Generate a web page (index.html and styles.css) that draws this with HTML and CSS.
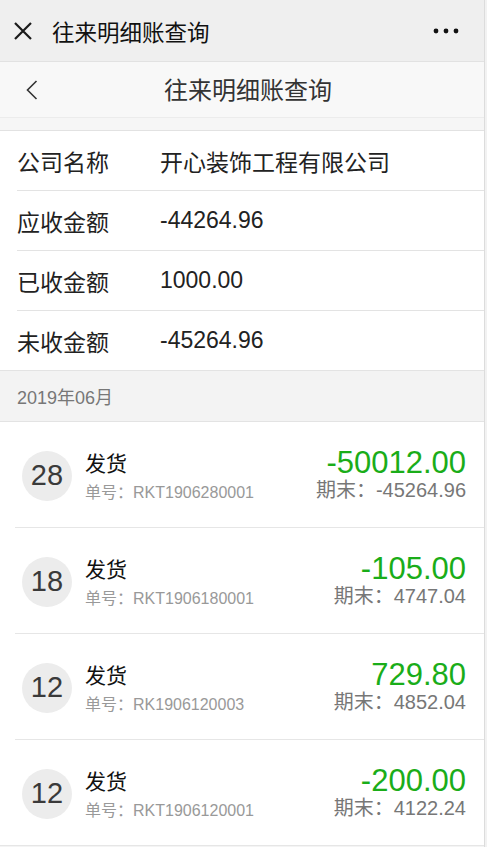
FILE: index.html
```html
<!DOCTYPE html>
<html lang="zh-CN">
<head>
<meta charset="utf-8">
<title>往来明细账查询</title>
<link rel="stylesheet" href="styles.css">
</head>
<body>
<div class="page">
  <header class="wxbar">
    <svg class="wx-close" width="20" height="20" viewBox="0 0 20 20"><path d="M2 2 L18 18 M18 2 L2 18" stroke="#1a1a1a" stroke-width="2.2" fill="none"/></svg>
    <div class="wx-title">往来明细账查询</div>
    <svg class="wx-more" width="26" height="6" viewBox="0 0 26 6"><circle cx="3" cy="3" r="2.4" fill="#111"/><circle cx="13" cy="3" r="2.4" fill="#111"/><circle cx="23" cy="3" r="2.4" fill="#111"/></svg>
  </header>
  <nav class="nav">
    <svg class="nav-back" width="12" height="20" viewBox="0 0 12 20"><path d="M10.5 1 L1.5 10 L10.5 19" stroke="#333" stroke-width="1.6" fill="none"/></svg>
    <div class="nav-title">往来明细账查询</div>
  </nav>
  <div class="gap"></div>
  <section class="info">
    <div class="info-row"><span class="info-label">公司名称</span><span class="info-value">开心装饰工程有限公司</span></div>
    <div class="info-row"><span class="info-label">应收金额</span><span class="info-value">-44264.96</span></div>
    <div class="info-row"><span class="info-label">已收金额</span><span class="info-value">1000.00</span></div>
    <div class="info-row last"><span class="info-label">未收金额</span><span class="info-value">-45264.96</span></div>
  </section>
  <div class="month">2019年06月</div>
  <section class="list">
    <div class="item">
      <div class="day">28</div>
      <div class="item-main"><div class="item-type">发货</div><div class="item-no">单号：RKT1906280001</div></div>
      <div class="item-side"><div class="amount">-50012.00</div><div class="balance">期末：-45264.96</div></div>
    </div>
    <div class="item">
      <div class="day">18</div>
      <div class="item-main"><div class="item-type">发货</div><div class="item-no">单号：RKT1906180001</div></div>
      <div class="item-side"><div class="amount">-105.00</div><div class="balance">期末：4747.04</div></div>
    </div>
    <div class="item">
      <div class="day">12</div>
      <div class="item-main"><div class="item-type">发货</div><div class="item-no">单号：RK1906120003</div></div>
      <div class="item-side"><div class="amount">729.80</div><div class="balance">期末：4852.04</div></div>
    </div>
    <div class="item last">
      <div class="day">12</div>
      <div class="item-main"><div class="item-type">发货</div><div class="item-no">单号：RKT1906120001</div></div>
      <div class="item-side"><div class="amount">-200.00</div><div class="balance">期末：4122.24</div></div>
    </div>
  </section>
</div>
</body>
</html>
```
FILE: styles.css
```css
* { box-sizing: border-box; }
html, body { margin: 0; padding: 0; }
body {
  background: #f2f2f2;
  font-family: "Liberation Sans", "Noto Sans CJK SC", sans-serif;
  color: #222;
}
.page {
  width: 485px;
  min-height: 847px;
  background: #f4f4f4;
  border-right: 1px solid #dcdcdc;
}
.wxbar {
  height: 62px;
  background: #efefef;
  border-bottom: 1px solid #e2e2e2;
  display: flex;
  align-items: center;
  padding: 0 25px 0 13px;
}
.wx-close { flex: none; }
.wx-title {
  margin-left: 19px;
  font-size: 22.5px;
  color: #111;
  flex: 1;
  font-family: "Noto Sans CJK SC", sans-serif;
}
.wx-more { flex: none; }
.nav {
  height: 56px;
  background: #f8f8f8;
  border-bottom: 1px solid #ececec;
  display: flex;
  align-items: center;
  padding-left: 26px;
}
.nav-title {
  flex: 1;
  text-align: center;
  font-size: 24px;
  color: #333;
  margin-left: -26px;
  padding-bottom: 2px;
  font-family: "Noto Sans CJK SC", sans-serif;
}
.gap {
  height: 13px;
  background: #f6f6f6;
  border-bottom: 1px solid #e2e2e2;
}
.info { background: #fff; }
.info-row {
  height: 60px;
  display: flex;
  align-items: center;
  margin-left: 17px;
  border-bottom: 1px solid #e3e3e3;
  font-size: 23px;
  color: #222;
}
.info-row.last { margin-left: 0; padding-left: 17px; }
.info-label { width: 143px; flex: none; }
.info-value { flex: 1; }
.month {
  height: 51px;
  display: flex;
  align-items: center;
  padding-left: 17px;
  background: #f3f3f3;
  border-bottom: 1px solid #e3e3e3;
  font-size: 18px;
  color: #777;
}
.list { background: #fff; }
.item {
  height: 106px;
  margin-left: 15px;
  padding: 0 18px 2px 7px;
  display: flex;
  align-items: center;
  border-bottom: 1px solid #e6e6e6;
}
.item.last { margin-left: 0; padding-left: 22px; }
.day {
  width: 50px;
  height: 50px;
  border-radius: 50%;
  background: #ececec;
  flex: none;
  display: flex;
  align-items: center;
  justify-content: center;
  font-size: 29px;
  color: #3a3a3a;
  margin-top: 4px;
}
.item-main {
  flex: 1;
  margin-left: 13px;
  padding-top: 6px;
}
.item-type {
  font-size: 21px;
  color: #111;
  line-height: 28px;
}
.item-no {
  font-size: 16px;
  color: #999;
  line-height: 22px;
  margin-top: 4px;
}
.item-side { text-align: right; }
.amount {
  font-size: 31px;
  color: #1aad19;
  line-height: 32px;
}
.balance {
  font-size: 20px;
  color: #777;
  line-height: 22px;
}
```
